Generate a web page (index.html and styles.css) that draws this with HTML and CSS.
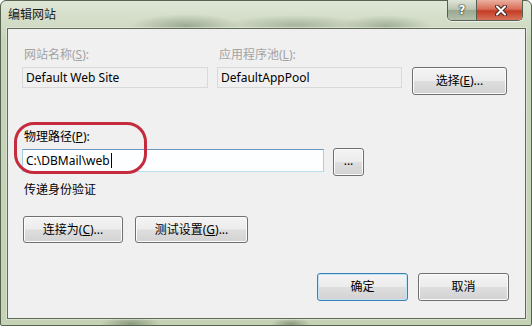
FILE: index.html
```html
<!DOCTYPE html>
<html>
<head>
    <meta charset="utf-8">
    <link rel="stylesheet" href="styles.css">
</head>
<body>
    <div class="window">
        <div class="titlebar">
            <span class="title">编辑网站</span>
            <div class="caption-buttons">
                <span class="cap-help">?</span>
                <span class="cap-close">
                    <svg width="12" height="11" viewBox="0 0 12 11">
                        <path d="M2 1.5 L10 9.5 M10 1.5 L2 9.5" stroke="#4a2a24" stroke-width="4" stroke-linecap="round"/>
                        <path d="M2 1.5 L10 9.5 M10 1.5 L2 9.5" stroke="#ffffff" stroke-width="2" stroke-linecap="round"/>
                    </svg>
                </span>
            </div>
        </div>
        <div class="client">
            <div class="site-grid">
                <div class="label disabled">网站名称(<u>S</u>):</div>
                <div class="label disabled">应用程序池(<u>L</u>):</div>
                <div></div>
                <div class="textbox readonly">Default Web Site</div>
                <div class="textbox readonly">DefaultAppPool</div>
                <button class="btn select-btn">选择(<u>E</u>)...</button>
            </div>

            <div class="path-section">
                <div class="label">物理路径(<u>P</u>):</div>
                <div class="path-row">
                    <div class="textbox path">C:\DBMail\web<span class="caret"></span></div>
                    <button class="btn browse">...</button>
                </div>
                <div class="label auth">传递身份验证</div>
            </div>

            <div class="connect-row">
                <button class="btn connect">连接为(<u>C</u>)...</button>
                <button class="btn test">测试设置(<u>G</u>)...</button>
            </div>

            <div class="footer">
                <button class="btn default">确定</button>
                <button class="btn">取消</button>
            </div>

            <!-- red annotation drawn over the path field -->
            <div class="highlight"></div>
        </div>
    </div>
</body>
</html>
```

FILE: styles.css
```css
body {
    margin: 0;
    background-color: #ffffff;
    font-family: "Noto Sans", "Noto Sans CJK SC", sans-serif;
    font-size: 12px;
    color: #000;
}

.window {
    width: 532px;
    height: 326px;
    box-sizing: border-box;
    border: 1px solid #56634f;
    border-radius: 6px 6px 2px 2px;
    display: flex;
    flex-direction: column;
    background:
        radial-gradient(ellipse 55px 12px at 185px 25px, rgba(95, 110, 85, 0.45), transparent),
        radial-gradient(ellipse 70px 10px at 295px 24px, rgba(95, 110, 85, 0.35), transparent),
        radial-gradient(ellipse 45px 11px at 385px 25px, rgba(95, 110, 85, 0.4), transparent),
        radial-gradient(ellipse 30px 8px at 130px 323px, rgba(80, 95, 70, 0.5), transparent),
        radial-gradient(ellipse 20px 6px at 290px 323px, rgba(80, 95, 70, 0.5), transparent),
        linear-gradient(#dfe6d6, #c8d4ba 12%, #c5d2b5);
}

.titlebar {
    height: 27px;
    display: flex;
    align-items: flex-start;
}

.title {
    margin-left: 7px;
    margin-top: 6px;
    line-height: 16px;
    color: #1a1a1a;
}

.caption-buttons {
    margin-left: auto;
    margin-right: 8px;
    margin-top: -1px;
    display: flex;
    height: 20px;
    border: 1px solid #55604f;
    border-top: none;
    border-radius: 0 0 5px 5px;
    overflow: hidden;
    box-shadow: 0 1px 0 rgba(255, 255, 255, 0.6);
}

.cap-help {
    width: 28px;
    border-right: 1px solid #55604f;
    background: linear-gradient(#dfe5d9, #b9c3b1 48%, #9aa791 52%, #b5c0ab);
    color: #fff;
    font-family: "DejaVu Sans", sans-serif;
    font-weight: bold;
    font-size: 12px;
    line-height: 20px;
    text-align: center;
    text-shadow: 0 0 1px #2d3a2a, 0 0 1px #2d3a2a, 0 0 2px #2d3a2a;
}

.cap-close {
    width: 45px;
    background: linear-gradient(#eab0a1, #d96e58 45%, #c43c24 55%, #d6725a);
    display: flex;
    align-items: center;
    justify-content: center;
    padding-left: 3px;
    box-sizing: border-box;
}

.client {
    position: relative;
    margin: 0 5px 0 6px;
    height: 291px;
    box-sizing: border-box;
    border: 1px solid #5e6b57;
    background-color: #f0f0f0;
    padding: 18px 0 0 14px;
    box-shadow: 0 0 0 1px rgba(255, 255, 255, 0.35);
}

.label {
    line-height: 16px;
    padding-left: 2px;
    white-space: nowrap;
}

.label.disabled {
    color: #a3a3a3;
}

.site-grid {
    display: grid;
    grid-template-columns: 186px 185px 96px;
    column-gap: 9px;
    row-gap: 4px;
}

.textbox {
    box-sizing: border-box;
    line-height: 19px;
    padding-left: 3px;
    white-space: nowrap;
}

.textbox.readonly {
    height: 21px;
    border: 1px solid #d9d9d9;
    background-color: #f0f0f0;
}

.textbox.path {
    width: 302px;
    height: 23px;
    line-height: 21px;
    border: 1px solid;
    border-color: #6b97bd #a9cde6 #bcdcef #a9cde6;
    background-color: #fdfeff;
}

.caret {
    display: inline-block;
    width: 1px;
    height: 15px;
    margin-left: 1px;
    vertical-align: -3px;
    background-color: #000;
}

.btn {
    box-sizing: border-box;
    padding: 0;
    border: 1px solid #707070;
    border-radius: 3px;
    background: linear-gradient(#f4f4f4, #ececec 48%, #dedede 52%, #d2d2d2);
    box-shadow: inset 0 0 0 1px #fbfbfb;
    font-family: "Noto Sans", "Noto Sans CJK SC", sans-serif;
    font-size: 12px;
    color: #000;
    line-height: 16px;
}

.select-btn {
    width: 95px;
    height: 28px;
    justify-self: end;
}

.path-section {
    margin-top: 34px;
}

.path-row {
    display: flex;
    align-items: flex-start;
    gap: 9px;
    margin-top: 4px;
}

.browse {
    width: 31px;
    height: 28px;
    margin-top: -1px;
    padding-bottom: 2px;
}

.label.auth {
    margin-top: 6px;
}

.connect-row {
    display: flex;
    gap: 12px;
    margin-top: 18px;
    margin-left: 1px;
}

.connect {
    width: 100px;
    height: 27px;
}

.test {
    width: 113px;
    height: 27px;
}

.footer {
    display: flex;
    justify-content: flex-end;
    gap: 10px;
    margin-top: 30px;
    padding-right: 16px;
}

.footer .btn {
    width: 91px;
    height: 28px;
}

.btn.default {
    border-color: #3c7fb1;
    box-shadow: inset 0 0 0 1px #bfe4f7;
}

.highlight {
    position: absolute;
    left: 6px;
    top: 93px;
    width: 133px;
    height: 52px;
    box-sizing: border-box;
    border: 3px solid #c42b3e;
    border-radius: 20px;
}
```
